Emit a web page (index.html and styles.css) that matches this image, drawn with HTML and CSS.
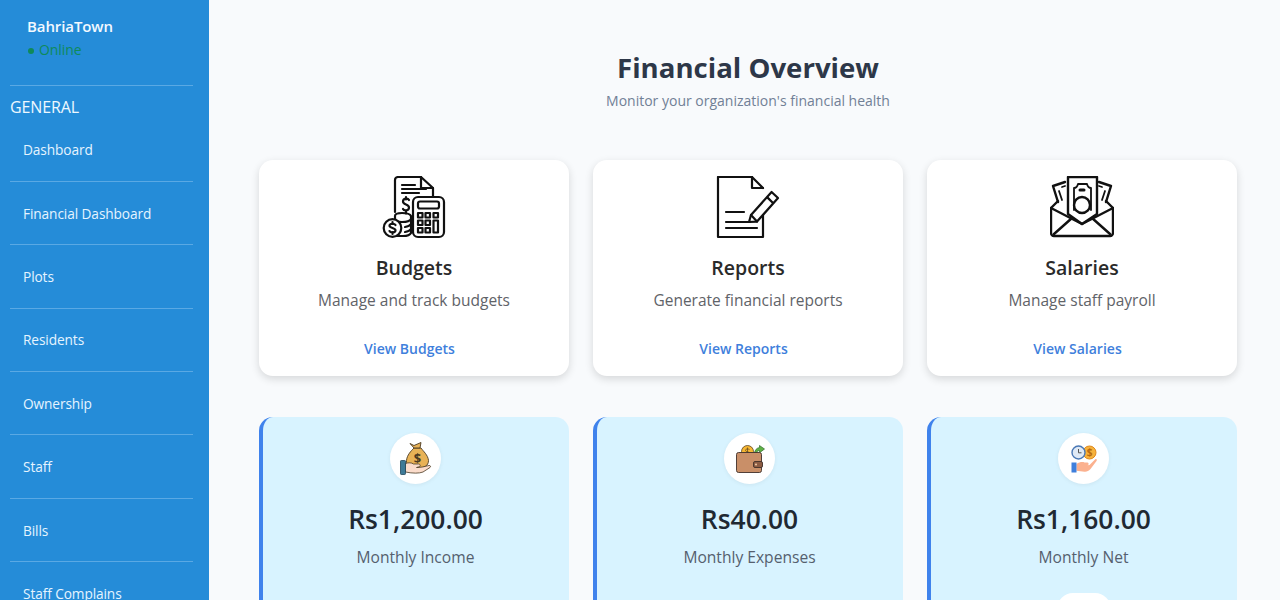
FILE: index.html
```html
<!DOCTYPE html>
<html lang="en">
<head>
<meta charset="utf-8">
<title>Financial Overview</title>
<link rel="stylesheet" href="styles.css">
</head>
<body>
<div class="app">
  <aside class="sidebar">
    <div class="brand">
      <div class="brand-name">BahriaTown</div>
      <div class="status"><span class="dot"></span>Online</div>
    </div>
    <div class="section">GENERAL</div>
    <nav class="nav">
      <a class="nav-item">Dashboard</a>
      <a class="nav-item">Financial Dashboard</a>
      <a class="nav-item">Plots</a>
      <a class="nav-item">Residents</a>
      <a class="nav-item">Ownership</a>
      <a class="nav-item">Staff</a>
      <a class="nav-item">Bills</a>
      <a class="nav-item">Staff Complains</a>
    </nav>
  </aside>
  <main class="main">
    <header class="head">
      <h1 class="title">Financial Overview</h1>
      <p class="subtitle">Monitor your organization's financial health</p>
    </header>
    <section class="grid">
      <article class="card">
        <svg class="card-icon" viewBox="0 0 64 64" fill="none" stroke="#111" stroke-width="2.200" stroke-linejoin="round" stroke-linecap="round">
          <path d="M13 36V4a3 3 0 0 1 3-3h23l12 11v9"/><path d="M39 1v11h12"/>
          <path d="M20 9h13M20 13h24M20 17h17"/>
          <path d="M27 24c-1-2-6-2-6 1.500s6 2.500 6 6-5 3.500-6 1.500M24 21v2.500M24 35v2.500"/>
          <rect x="31" y="21" width="31" height="40" rx="5" fill="#fff"/>
          <rect x="36" y="25.500" width="21" height="7" rx="2"/>
          <path d="M36 37h4.500v4.500H36zM43.500 37H48v4.500h-4.500zM51.500 37H56v4.500h-4.500zM36 44.500h4.500V49H36zM43.500 44.500H48V49h-4.500zM36 52h4.500v4.500H36zM43.500 52H48v4.500h-4.500zM51.500 44.500H56v12h-4.500z"/>
          <path d="M13 40c0-2 3-3 7-3s8 1 9 3v3c-1 2-4 3-9 3s-7-1-7-2M13 40v3M29 43v5c-1 1.500-3 2.500-6 3M29 48v5c-1 1.500-3 2.500-6 3M29 53v4c-1 2-4 3-8 3h-7"/>
          <circle cx="10.500" cy="52" r="8.800" fill="#fff"/>
          <path d="M13.500 49c-1-1.800-6-1.800-6 .8s6 1.800 6 4.500-5 2.800-6 .8M10.500 46v2M10.500 56v2"/>
        </svg>
        <h2 class="card-title">Budgets</h2>
        <p class="card-text">Manage and track budgets</p>
        <a class="card-link">View Budgets</a>
      </article>
      <article class="card">
        <svg class="card-icon" viewBox="0 0 64 64" fill="none" stroke="#111" stroke-width="2.200" stroke-linejoin="round" stroke-linecap="round">
          <path d="M47 28v33H2V1h34l11 11"/><path d="M36 1v11h11"/>
          <path d="M10 36h18M10 46h24M10 52h31"/>
          <path d="M33 46l2-7L55.600 16 62 22 41 45.600z" fill="#fff"/>
          <path d="M51.600 21.600L57 27M35 39l6 6.600"/>
        </svg>
        <h2 class="card-title">Reports</h2>
        <p class="card-text">Generate financial reports</p>
        <a class="card-link">View Reports</a>
      </article>
      <article class="card">
        <svg class="card-icon" viewBox="0 0 64 64" fill="none" stroke="#111" stroke-width="2.400" stroke-linejoin="round" stroke-linecap="round">
          <path d="M8 26L3 10l12-4M56 26l5-16-12-4"/>
          <path d="M9 15l3 9M12 11l3-1M55 15l-3 9M52 11l-3-1" stroke-width="1.800"/>
          <path d="M18 1h29v37L32 48 18 38z" fill="#fff"/>
          <path d="M24 34V12q3 0 4-4h9q1 4 4 4v22" stroke-width="1.800"/>
          <circle cx="32" cy="29" r="8"/>
          <path d="M30 14h4" stroke-width="3"/>
          <path d="M8 25l-7 7v25a3 3 0 0 0 3 3h56a3 3 0 0 0 3-3V32l-7-7"/>
          <path d="M1 32l31 16 31-16"/>
          <path d="M4 58l18-16M60 58L42 42"/>
        </svg>
        <h2 class="card-title">Salaries</h2>
        <p class="card-text">Manage staff payroll</p>
        <a class="card-link">View Salaries</a>
      </article>
    </section>
    <section class="grid stats">
      <article class="stat">
        <span class="stat-icon">
          <svg viewBox="0 0 36 36" class="stat-svg">
            <path d="M16 7c-3 3-7 7-7.500 12.500C8 25 12 27 19 27s11.500-2 11.500-7.500C30 14 25 10 23 7z" fill="#e8b256" stroke="#4a3a22" stroke-width=".9"/>
            <path d="M12 2.500l4 2 7-3-1 5.500h-6z" fill="#e8b256" stroke="#4a3a22" stroke-width=".9"/>
            <text x="19.500" y="22" class="bag-sign">$</text>
            <path d="M7.500 22.500c3-1 6-1 8 .5h5c2 0 2.500 2.800 0 3l-2 .5 6-.5 6.500-1.500c1.500-.3 2 1 1 2l-7 4.500c-4 1.500-10 1.500-17.500 0z" fill="#fbdccb" stroke="#4a3a22" stroke-width=".8"/>
            <rect x="2.500" y="19.500" width="5" height="14" rx=".8" fill="#3e7a97" stroke="#23485a" stroke-width=".8"/>
          </svg>
        </span>
        <div class="amount">Rs1,200.00</div>
        <div class="stat-label">Monthly Income</div>
      </article>
      <article class="stat">
        <span class="stat-icon">
          <svg viewBox="0 0 36 36" class="stat-svg">
            <circle cx="15.500" cy="10.500" r="6" fill="#f7b733" stroke="#5b4320" stroke-width=".8"/>
            <path d="M15.500 6.500v8M17.500 8.500c-2-1.200-4-.5-4 1s4 1 4 2.500-2 2-4 1" fill="none" stroke="#5b4320" stroke-width=".7"/>
            <path d="M22.500 12.500c0-3 2-5.500 5-6V4.500l5 3.500-5 3.800V9.500c-2 0-3 1.500-3.200 3z" fill="#5fb246" stroke="#2f6a2a" stroke-width=".7"/>
            <rect x="4.500" y="11.500" width="25" height="20" rx="2" fill="#c98f68" stroke="#40302a" stroke-width=".9"/>
            <rect x="21.500" y="20.500" width="9" height="6" rx="1.500" fill="#8d5c43" stroke="#40302a" stroke-width=".9"/>
            <circle cx="24" cy="23.500" r="1.100" fill="#e9c39f"/>
          </svg>
        </span>
        <div class="amount">Rs40.00</div>
        <div class="stat-label">Monthly Expenses</div>
      </article>
      <article class="stat">
        <span class="stat-icon">
          <svg viewBox="0 0 36 36" class="stat-svg">
            <circle cx="23.500" cy="11.500" r="6.500" fill="#f7b23b" stroke="#e08a1e" stroke-width="1"/>
            <text x="23.500" y="15" class="coin-sign">$</text>
            <circle cx="12.500" cy="11.500" r="6.500" fill="#dfe9f5" stroke="#4a78b5" stroke-width="1.400"/>
            <path d="M12.500 8v3.800h3" fill="none" stroke="#555" stroke-width="1"/>
            <path d="M10.500 23c3-2 6-2.500 8-1.500h3c1.500.3 1.500 2.500 0 2.800l2-.3 5.500-5.500c1.200-1 2.500 0 1.500 1.500l-6 8c-2 2-4 3-6 2.700l-8-1z" fill="#fbb18f"/>
            <rect x="5.500" y="21.500" width="5" height="10" fill="#3f7fdc"/>
          </svg>
        </span>
        <div class="amount">Rs1,160.00</div>
        <div class="stat-label">Monthly Net</div>
        <span class="stat-btn"></span>
      </article>
    </section>
  </main>
</div>
</body>
</html>
```

FILE: styles.css
```css
* { box-sizing: border-box; }
html, body { margin: 0; height: 100%; overflow: hidden; }
body { font-family: "Open Sans", "Noto Sans", sans-serif; background: #f8fafc; color: #1f2937; }
.app { display: flex; height: 600px; overflow: hidden; }

.sidebar { width: 209px; flex: none; background: #258cd8; color: #e6f4ff; padding: 0 16px 0 10px; }
.brand { height: 86px; padding: 16px 0 0 17px; border-bottom: 1px solid #5aa9e4; }
.brand-name { font-size: 15px; font-weight: 600; line-height: 20px; color: #f2f9ff; letter-spacing: -.1px; }
.status { display: flex; align-items: center; font-size: 14px; line-height: 20px; margin-top: 4px; color: #0f8a5a; letter-spacing: -.1px; }
.dot { width: 6px; height: 6px; border-radius: 50%; background: #0f8a5a; margin: 1px 5px 0 1px; }
.section { font-size: 16px; line-height: 20px; padding: 11px 0 1.500px; letter-spacing: -.1px; color: #eef8ff; }
.nav { display: flex; flex-direction: column; }
.nav-item { display: flex; align-items: center; height: 63.400px; padding: 0 0 0 13px; font-size: 13.700px; letter-spacing: -.1px; border-bottom: 1px solid #5aa9e4; flex: none; }

.main { flex: 1; min-width: 0; padding: 49px 43px 0 50px; }
.head { text-align: center; height: 111px; }
.title { margin: 0; font-size: 27.600px; line-height: 36px; font-weight: 700; color: #2d3748; }
.subtitle { margin: 6px 0 0; font-size: 14px; line-height: 20px; color: #718096; }

.grid { display: grid; grid-template-columns: repeat(3, 310px); gap: 24px; }
.card { height: 216px; background: #fff; border-radius: 14px; box-shadow: 0 3px 8px rgba(0,0,0,.14); display: flex; flex-direction: column; align-items: center; padding-top: 16px; }
.card-icon { width: 64px; height: 64px; display: block; }
.card-title { margin: 15px 0 0; font-size: 19.500px; line-height: 26px; font-weight: 600; color: #2a2a2a; }
.card-text { margin: 8px 0 0; font-size: 15.500px; line-height: 22px; color: #5f6368; }
.card-link { margin-top: 28px; padding-right: 9px; font-size: 14px; line-height: 20px; font-weight: 600; color: #3f7fdc; }

.stats { margin-top: 41px; }
.stat { height: 240px; background: #d8f3ff; border-left: 4px solid #3f82ec; border-radius: 14px; display: flex; flex-direction: column; align-items: center; padding: 16px 1px 0 0; }
.stat-icon { width: 51px; height: 51px; border-radius: 50%; background: #fff; display: flex; align-items: center; justify-content: center; box-shadow: 0 1px 4px rgba(0,0,0,.06); }
.stat-svg { width: 36px; height: 36px; display: block; }
.bag-sign { font-size: 13px; font-weight: 700; fill: #4a3a22; text-anchor: middle; }
.coin-sign { font-size: 10px; font-weight: 700; fill: #b96a10; text-anchor: middle; }
.amount { margin-top: 16px; font-size: 26.400px; line-height: 38px; font-weight: 600; color: #1f2933; }
.stat-label { margin-top: 8px; font-size: 15.600px; line-height: 22px; color: #55606e; }
.stat-btn { width: 54px; height: 40px; background: #fff; border-radius: 16px; margin-top: 25px; }
```
